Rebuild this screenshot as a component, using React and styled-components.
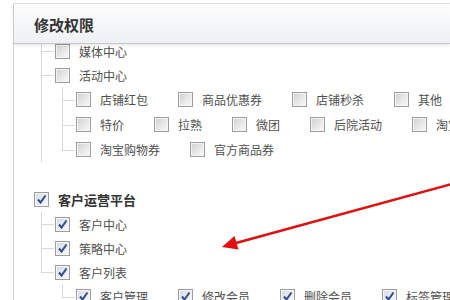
import styled, { createGlobalStyle } from "styled-components";

const GlobalStyle = createGlobalStyle`
  html, body {
    margin: 0;
    padding: 0;
    background: #ffffff;
  }
  body {
    font-family: "Noto Sans CJK SC", "Noto Sans", sans-serif;
  }
`;

const upperNodes = [
  { label: "媒体中心" },
  {
    label: "活动中心",
    rows: [
      ["店铺红包", "商品优惠券", "店铺秒杀", "其他"],
      ["特价", "拉熟", "微团", "后院活动", "淘宝商品"],
      ["淘宝购物券", "官方商品券"],
    ],
  },
];

const customerNodes = [
  { label: "客户中心" },
  { label: "策略中心" },
  {
    label: "客户列表",
    last: true,
    rows: [["客户管理", "修改会员", "删除会员", "标签管理"]],
  },
];

function Check({ checked }) {
  return (
    <Box $checked={checked}>
      {checked && (
        <svg width="11" height="11" viewBox="0 0 11 11">
          <path d="M2 5.5 L4.5 8.5 L9.5 1.5" fill="none" stroke="#2e4c8e" strokeWidth="2" />
        </svg>
      )}
    </Box>
  );
}

function InlineRows({ rows, checked }) {
  return (
    <Children>
      {rows.map((items, i) => (
        <Node key={i} $last={i === rows.length - 1} $h={25}>
          <Row $h={25}>
            {items.map((t) => (
              <Item key={t}>
                <Check checked={checked} />
                <Label>{t}</Label>
              </Item>
            ))}
          </Row>
        </Node>
      ))}
    </Children>
  );
}

function Branch({ nodes, checked }) {
  return (
    <Children>
      {nodes.map((n) => (
        <Node key={n.label} $last={n.last} $h={24}>
          <Row $h={24}>
            <Item>
              <Check checked={checked} />
              <Label>{n.label}</Label>
            </Item>
          </Row>
          {n.rows && <InlineRows rows={n.rows} checked={checked} />}
        </Node>
      ))}
    </Children>
  );
}

export default function App() {
  return (
    <Page>
      <GlobalStyle />
      <Frame>
        <Header>
          <Title>修改权限</Title>
        </Header>
        <Body>
          <Tree>
            <Branch nodes={upperNodes} checked={false} />
            <RootNode>
              <Row $h={26} $root>
                <Item>
                  <Check checked />
                  <RootLabel>客户运营平台</RootLabel>
                </Item>
              </Row>
              <Branch nodes={customerNodes} checked />
            </RootNode>
          </Tree>
        </Body>
      </Frame>
      <Arrow width="450" height="300" viewBox="0 0 450 300">
        <line x1="452" y1="184" x2="236" y2="243" stroke="#e10f0f" strokeWidth="2.5" />
        <polygon points="222,247 238.5,249.5 234.5,236" fill="#e10f0f" />
      </Arrow>
    </Page>
  );
}

const Page = styled.div`
  position: relative;
  width: 450px;
  height: 300px;
  overflow: hidden;
  background: #ffffff;
`;

const Frame = styled.div`
  margin: 3px 0 0 13px;
  height: 297px;
  box-sizing: border-box;
  border-top: 1px solid #e2e2e2;
  border-left: 1px solid #d4d4d4;
  display: flex;
  flex-direction: column;
`;

const Header = styled.div`
  position: relative;
  z-index: 1;
  flex: none;
  height: 40px;
  box-sizing: border-box;
  padding: 2px 0 0 20px;
  display: flex;
  align-items: center;
  background: linear-gradient(#fefefe, #eef0f4);
  border-bottom: 1px solid #c6c8cc;
  box-shadow: 0 1px 3px rgba(0, 0, 0, 0.12);
`;

const Title = styled.h2`
  margin: 0;
  font-size: 15px;
  font-weight: 700;
  color: #333333;
`;

const Body = styled.div`
  flex: 1;
  overflow: hidden;
`;

const Tree = styled.div`
  margin-top: -5px;
  padding-left: 20px;
`;

const Children = styled.ul`
  margin: 0;
  padding: 0 0 0 21px;
`;

const Node = styled.li`
  position: relative;
  list-style: none;
  &::before {
    content: "";
    position: absolute;
    left: -14px;
    top: 0;
    ${(p) => (p.$last ? `height: ${p.$h / 2}px;` : "bottom: 0;")}
    border-left: 1px solid #d9d9d9;
  }
`;

const RootNode = styled.div`
  margin-top: 24px;
`;

const Row = styled.div`
  position: relative;
  height: ${(p) => p.$h}px;
  display: flex;
  align-items: center;
  white-space: nowrap;
  &::before {
    content: "";
    display: ${(p) => (p.$root ? "none" : "block")};
    position: absolute;
    left: -14px;
    top: 50%;
    width: 13px;
    border-top: 1px solid #d9d9d9;
  }
`;

const Item = styled.label`
  display: flex;
  align-items: center;
  margin-right: 30px;
  flex: none;
`;

const Box = styled.span`
  flex: none;
  width: 13px;
  height: 13px;
  border: 1px solid #9e9e9e;
  box-shadow: inset 0 0 0 1px #f4f4f4;
  background: ${(p) =>
    p.$checked
      ? "linear-gradient(135deg, #d6d9e4 0%, #eeeff4 60%, #fafafa 100%)"
      : "linear-gradient(135deg, #cfcfcf 0%, #e8e8e8 55%, #fbfbfb 100%)"};
  display: flex;
  align-items: center;
  justify-content: center;
`;

const Label = styled.span`
  margin-left: 9px;
  font-size: 12px;
  color: #4f4f4f;
`;

const RootLabel = styled(Label)`
  font-size: 13px;
  font-weight: 700;
  color: #333333;
`;

const Arrow = styled.svg`
  position: absolute;
  top: 0;
  left: 0;
  pointer-events: none;
`;
